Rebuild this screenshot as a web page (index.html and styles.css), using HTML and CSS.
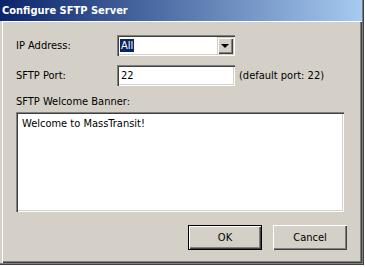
FILE: index.html
```html
<!DOCTYPE html>
<html lang="en">
<head>
    <meta charset="UTF-8">
    <meta name="viewport" content="width=device-width, initial-scale=1.0">
    <link rel="stylesheet" href="styles.css">
    <title>Configure SFTP Server</title>
</head>
<body>
    <div class="window">
        <div class="titlebar">Configure SFTP Server</div>
        <div class="panel">
            <div class="row">
                <label class="lbl">IP Address:</label>
                <div class="combo">
                    <span class="combo-val"><span class="sel">All</span></span>
                    <span class="drop"><span class="arrow"></span></span>
                </div>
            </div>
            <div class="row">
                <label class="lbl" for="port">SFTP Port:</label>
                <input type="text" id="port" class="field" value="22">
                <span class="hint">(default port: 22)</span>
            </div>
            <label class="lbl-block" for="banner">SFTP Welcome Banner:</label>
            <textarea id="banner" class="banner">Welcome to MassTransit!</textarea>
            <div class="buttons">
                <button type="button" class="btn btn-default">OK</button>
                <button type="button" class="btn">Cancel</button>
            </div>
        </div>
    </div>
</body>
</html>
```
FILE: styles.css
```css
*{box-sizing:border-box;}
body{
    margin:0;
    background:#fff;
    font-family:"DejaVu Sans Condensed","DejaVu Sans",sans-serif;
    font-stretch:condensed;
    font-size:11px;
    color:#000;
}
.window{
    width:364px;height:265px;
    padding:0 2px 2px 0;
    background:#d4d0c8;
    box-shadow:inset -1px -1px #404040,inset -2px -2px #808080;
}
.titlebar{
    height:21px;line-height:21px;
    padding-left:2px;
    color:#fff;font-weight:bold;
    background:linear-gradient(to right,#0a246a,#a6caf0);
}
.panel{
    margin-left:2px;height:242px;
    padding:14px 15px 0 14px;
    box-shadow:inset 1px 1px #fff,inset -1px -1px #404040,inset -2px -2px #808080;
}
.row{display:flex;align-items:center;height:21px;margin-bottom:9px;}
.lbl{width:101px;}
.combo{
    display:flex;width:118px;height:21px;padding:2px;
    background:#fff;
    box-shadow:inset 1px 1px #808080,inset 2px 2px #404040,inset -1px -1px #fff,inset -2px -2px #d4d0c8;
}
.combo-val{flex:1;display:flex;align-items:center;padding-left:1px;}
.sel{background:#0a246a;color:#fff;padding:0 1px;line-height:13px;}
.drop{
    display:flex;align-items:center;justify-content:center;
    width:16px;background:#d4d0c8;
    box-shadow:inset 1px 1px #d4d0c8,inset 2px 2px #fff,inset -1px -1px #404040,inset -2px -2px #808080;
}
.arrow{width:0;height:0;border-left:4px solid transparent;border-right:4px solid transparent;border-top:4px solid #000;margin-top:1px;}
.field{
    width:118px;height:21px;padding:0 4px;
    border:none;outline:none;background:#fff;
    font:inherit;color:#000;
    box-shadow:inset 1px 1px #808080,inset 2px 2px #404040,inset -1px -1px #fff,inset -2px -2px #d4d0c8;
}
.hint{margin-left:4px;}
.lbl-block{display:block;line-height:13px;margin-bottom:4px;}
.banner{
    display:block;width:328px;height:100px;
    padding:5px 6px;
    border:none;outline:none;resize:none;overflow:hidden;
    background:#fff;font:inherit;color:#000;line-height:13px;
    box-shadow:inset 1px 1px #808080,inset 2px 2px #404040,inset -1px -1px #fff,inset -2px -2px #d4d0c8;
}
.buttons{display:flex;justify-content:flex-end;gap:11px;margin-top:13px;}
.btn{
    width:74px;height:25px;padding:0;
    border:none;background:#d4d0c8;
    font:inherit;color:#000;
    box-shadow:inset 1px 1px #fff,inset -1px -1px #404040,inset -2px -2px #808080;
}
.btn-default{box-shadow:inset 0 0 0 1px #000,inset 2px 2px #fff,inset -2px -2px #404040,inset -3px -3px #808080;}
```
